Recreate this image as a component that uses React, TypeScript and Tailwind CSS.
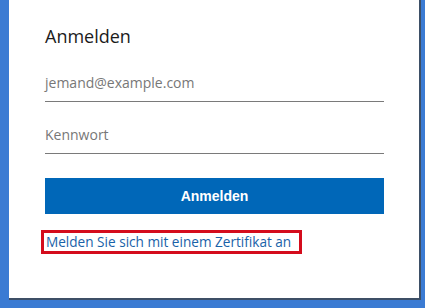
export default function App() {
  return (
    <div className="h-[308px] w-[425px] bg-[#3b7bd3] pl-[9px] pr-[4px] pb-[8px] font-['Open_Sans',sans-serif]">
      <div className="h-full bg-white border-r-2 border-b-2 border-[#3d4f66] pl-[36px] pr-[35px] pt-[23px]">
        <h1 className="text-[18px] leading-[26px] text-[#1b1b1b]">Anmelden</h1>
        <div className="mt-[23px] h-[30px] border-b border-[#7a7a7a] text-[14px] leading-[22px] text-[#777]">
          jemand@example.com
        </div>
        <div className="mt-[22px] h-[30px] border-b border-[#7a7a7a] text-[14px] leading-[22px] text-[#777]">
          Kennwort
        </div>
        <button className="mt-[24px] h-[36px] w-full bg-[#0067b8] text-white text-[14px] font-bold font-['Liberation_Sans',sans-serif]">
          Anmelden
        </button>
        <div className="mt-[16px] -ml-[4px] w-[261px] border-[3px] border-[#d40c1c] pl-[2px] h-[24px] text-[13.6px] leading-[18px] text-[#1a62a8]">
          Melden Sie sich mit einem Zertifikat an
        </div>
      </div>
    </div>
  );
}
